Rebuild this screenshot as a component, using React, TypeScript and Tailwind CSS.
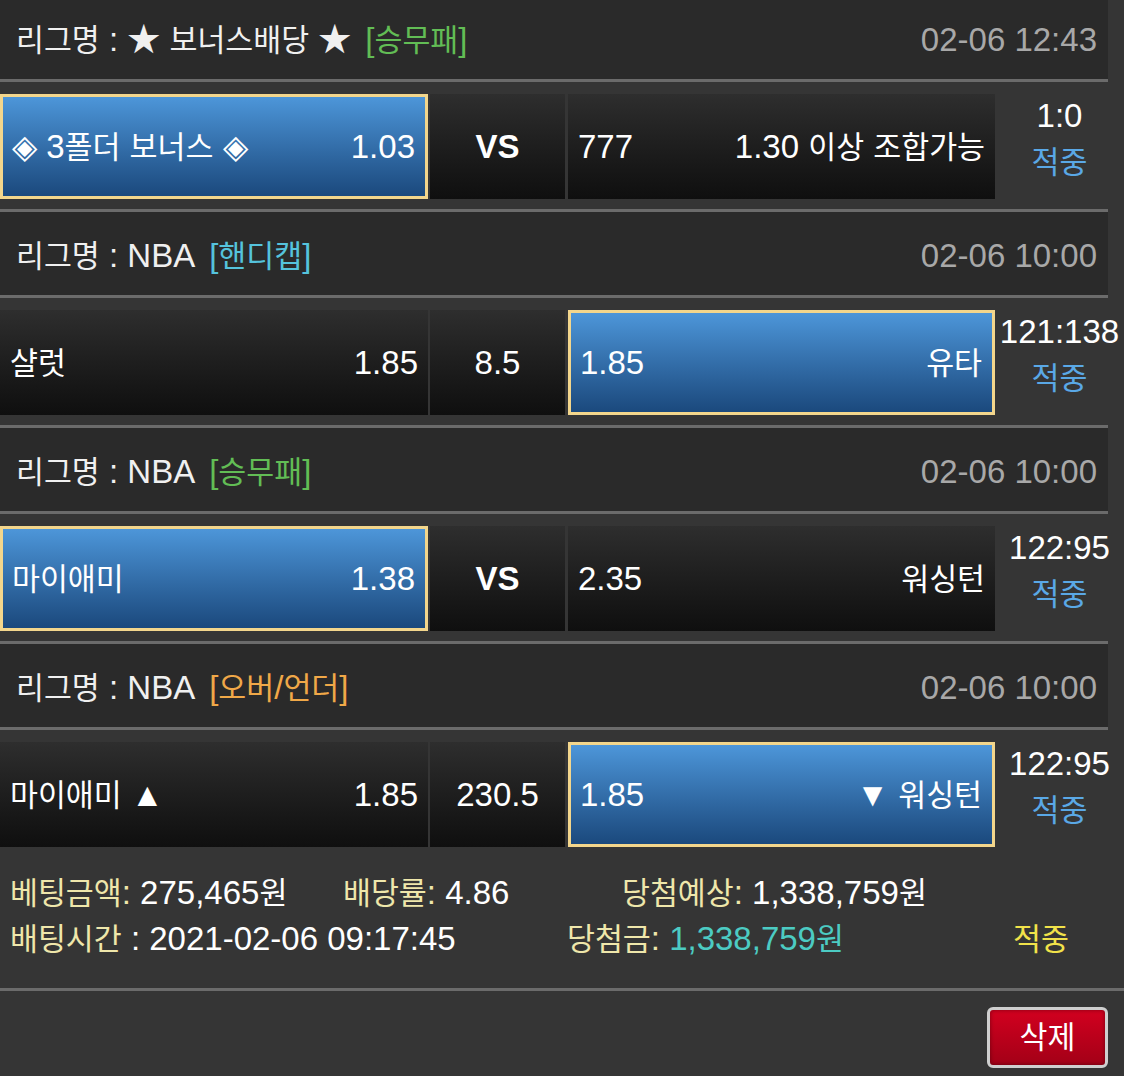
const HANGUL = /([\uAC00-\uD7A3]+)/;

// Hangul glyphs in Noto CJK run wider than the reference, so shrink those runs a bit
const T = ({ s }: { s: string }) => (
  <>
    {s.split(HANGUL).map((part, i) =>
      HANGUL.test(part) ? (
        <span key={i} className="text-[0.92em]">
          {part}
        </span>
      ) : (
        <span key={i}>{part}</span>
      )
    )}
  </>
);

type Match = {
  league: string;
  type: string;
  typeColor: string;
  date: string;
  home: [string, string];
  mid: string;
  away: [string, string];
  pick: "home" | "away";
  score: string;
};

const matches: Match[] = [
  {
    league: "★ 보너스배당 ★",
    type: "[승무패]",
    typeColor: "text-[#62bd55]",
    date: "02-06 12:43",
    home: ["◈ 3폴더 보너스 ◈", "1.03"],
    mid: "VS",
    away: ["777", "1.30 이상 조합가능"],
    pick: "home",
    score: "1:0",
  },
  {
    league: "NBA",
    type: "[핸디캡]",
    typeColor: "text-[#55c3dd]",
    date: "02-06 10:00",
    home: ["샬럿", "1.85"],
    mid: "8.5",
    away: ["1.85", "유타"],
    pick: "away",
    score: "121:138",
  },
  {
    league: "NBA",
    type: "[승무패]",
    typeColor: "text-[#62bd55]",
    date: "02-06 10:00",
    home: ["마이애미", "1.38"],
    mid: "VS",
    away: ["2.35", "워싱턴"],
    pick: "home",
    score: "122:95",
  },
  {
    league: "NBA",
    type: "[오버/언더]",
    typeColor: "text-[#f0a848]",
    date: "02-06 10:00",
    home: ["마이애미 ▲", "1.85"],
    mid: "230.5",
    away: ["1.85", "▼ 워싱턴"],
    pick: "away",
    score: "122:95",
  },
];

const Cell = ({ parts, selected, extra }: { parts: [string, string]; selected: boolean; extra: string }) => (
  <div
    className={
      selected
        ? `${extra} flex items-center justify-between border-[3px] border-[#f3d68c] bg-linear-to-b from-[#4d96d9] to-[#1b497d] pl-[9px] pr-[10px]`
        : `${extra} flex items-center justify-between bg-linear-to-b from-[#2e2e2e] to-[#0f0f0f] pl-[10px] pr-[10px]`
    }
  >
    <span className="whitespace-nowrap">
      <T s={parts[0]} />
    </span>
    <span className="whitespace-nowrap">
      <T s={parts[1]} />
    </span>
  </div>
);

export default function App() {
  return (
    <div className="h-[1076px] w-full overflow-hidden bg-[#353535] font-['Liberation_Sans','Noto_Sans_CJK_KR',sans-serif] text-[33px] text-white">
      {matches.map((m, i) => (
        <div key={i}>
          {/* League header */}
          <div
            className={
              i === 0
                ? "-mt-[7px] flex h-[89px] w-[1108px] items-center justify-between border-y-[3px] border-[#6b6b6b] bg-[#2a2a2a] pl-[16px] pr-[11px] pt-[4px]"
                : "flex h-[89px] w-[1108px] items-center justify-between border-y-[3px] border-[#6b6b6b] bg-[#2a2a2a] pl-[16px] pr-[11px] pt-[4px]"
            }
          >
            <div className="whitespace-nowrap text-[#f0f0f0]">
              <T s={`리그명 : ${m.league}`} />
              <span className={`ml-[14px] ${m.typeColor}`}>
                <T s={m.type} />
              </span>
            </div>
            <div className="text-[#a8a8a8]">{m.date}</div>
          </div>

          {/* Bet row */}
          <div className="flex h-[127px] pb-[10px] pt-[12px]">
            <Cell parts={m.home} selected={m.pick === "home"} extra="w-[428px]" />
            <div className="ml-[2px] flex w-[135px] items-center justify-center bg-linear-to-b from-[#2e2e2e] to-[#0f0f0f]">
              <span className={m.mid === "VS" ? "font-bold" : ""}>{m.mid}</span>
            </div>
            <Cell parts={m.away} selected={m.pick === "away"} extra="ml-[3px] w-[427px]" />
            <div className="flex w-[129px] flex-col items-center justify-center pb-[15px] leading-[46px]">
              <span>{m.score}</span>
              <span className="text-[#5aa8e6]">
                <T s="적중" />
              </span>
            </div>
          </div>
        </div>
      ))}

      {/* Summary */}
      <div className="h-[131px] whitespace-nowrap pl-[10px] pt-[13px] leading-[45px]">
        <div className="flex">
          <span className="w-[333px]">
            <span className="text-[#efe7ab]">
              <T s="베팅금액:" />
            </span>{" "}
            <T s="275,465원" />
          </span>
          <span className="w-[279px]">
            <span className="text-[#efe7ab]">
              <T s="배당률:" />
            </span>{" "}
            4.86
          </span>
          <span>
            <span className="text-[#efe7ab]">
              <T s="당첨예상:" />
            </span>{" "}
            <T s="1,338,759원" />
          </span>
        </div>
        <div className="flex">
          <span className="w-[557px]">
            <span className="text-[#efe7ab]">
              <T s="배팅시간" />
            </span>{" "}
            : 2021-02-06 09:17:45
          </span>
          <span className="w-[446px]">
            <span className="text-[#efe7ab]">
              <T s="당첨금:" />
            </span>{" "}
            <span className="text-[#4ccbc3]">
              <T s="1,338,759원" />
            </span>
          </span>
          <span className="text-[#f1e24a]">
            <T s="적중" />
          </span>
        </div>
      </div>

      <div className="flex justify-end border-t-[3px] border-[#6b6b6b] pr-[16px] pt-[16px]">
        <button className="flex h-[61px] w-[121px] items-center justify-center rounded-[6px] border-[3px] border-[#cfcfcf] bg-linear-to-b from-[#d2001f] to-[#a30017] text-white shadow-[inset_0_0_4px_rgba(0,0,0,0.4)]">
          <T s="삭제" />
        </button>
      </div>
    </div>
  );
}
